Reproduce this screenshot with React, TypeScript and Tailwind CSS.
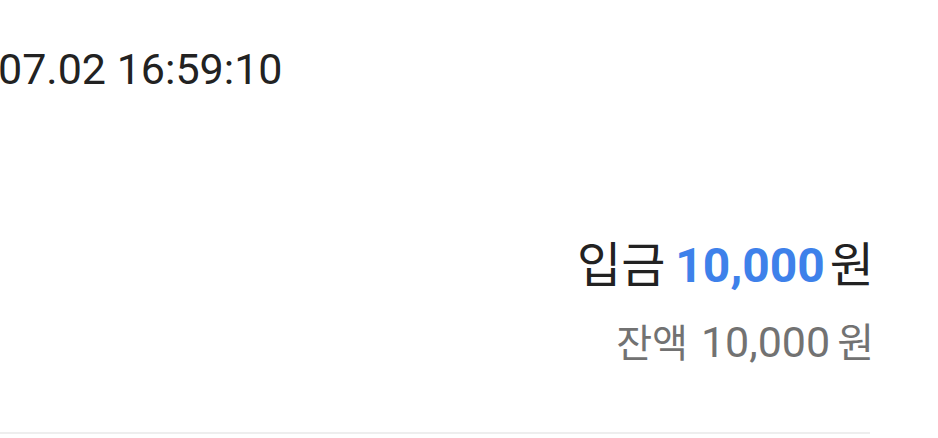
import React from "react";

export default function App() {
  return (
    <div className="w-[938px] h-[438px] bg-white overflow-hidden" style={{ fontFamily: 'Roboto, "Noto Sans CJK KR", sans-serif' }}>
      <div className="w-[870px]">
        <div className="pt-[44px] h-[238px]">
          <div className="text-[43px] leading-[50px] text-[#222222] -ml-[2px]">07.02 16:59:10</div>
        </div>
        <div className="flex flex-col items-end -mr-[4px]">
          <div className="flex items-baseline text-[48px] leading-[56px] text-[#222222]">
            <span>입금</span>
            <span className="ml-[10px] font-bold text-[#3e81ea]">10,000</span>
            <span className="ml-[5px]">원</span>
          </div>
          <div className="mt-[24px] flex items-baseline text-[43px] leading-[48px] text-[#727272]">
            <span className="text-[39px]">잔액</span>
            <span className="ml-[13px]">10,000</span>
            <span className="ml-[7px] text-[40px]">원</span>
          </div>
        </div>
        <div className="mt-[64px] h-[2px] bg-[#eeeeee]" />
      </div>
    </div>
  );
}
